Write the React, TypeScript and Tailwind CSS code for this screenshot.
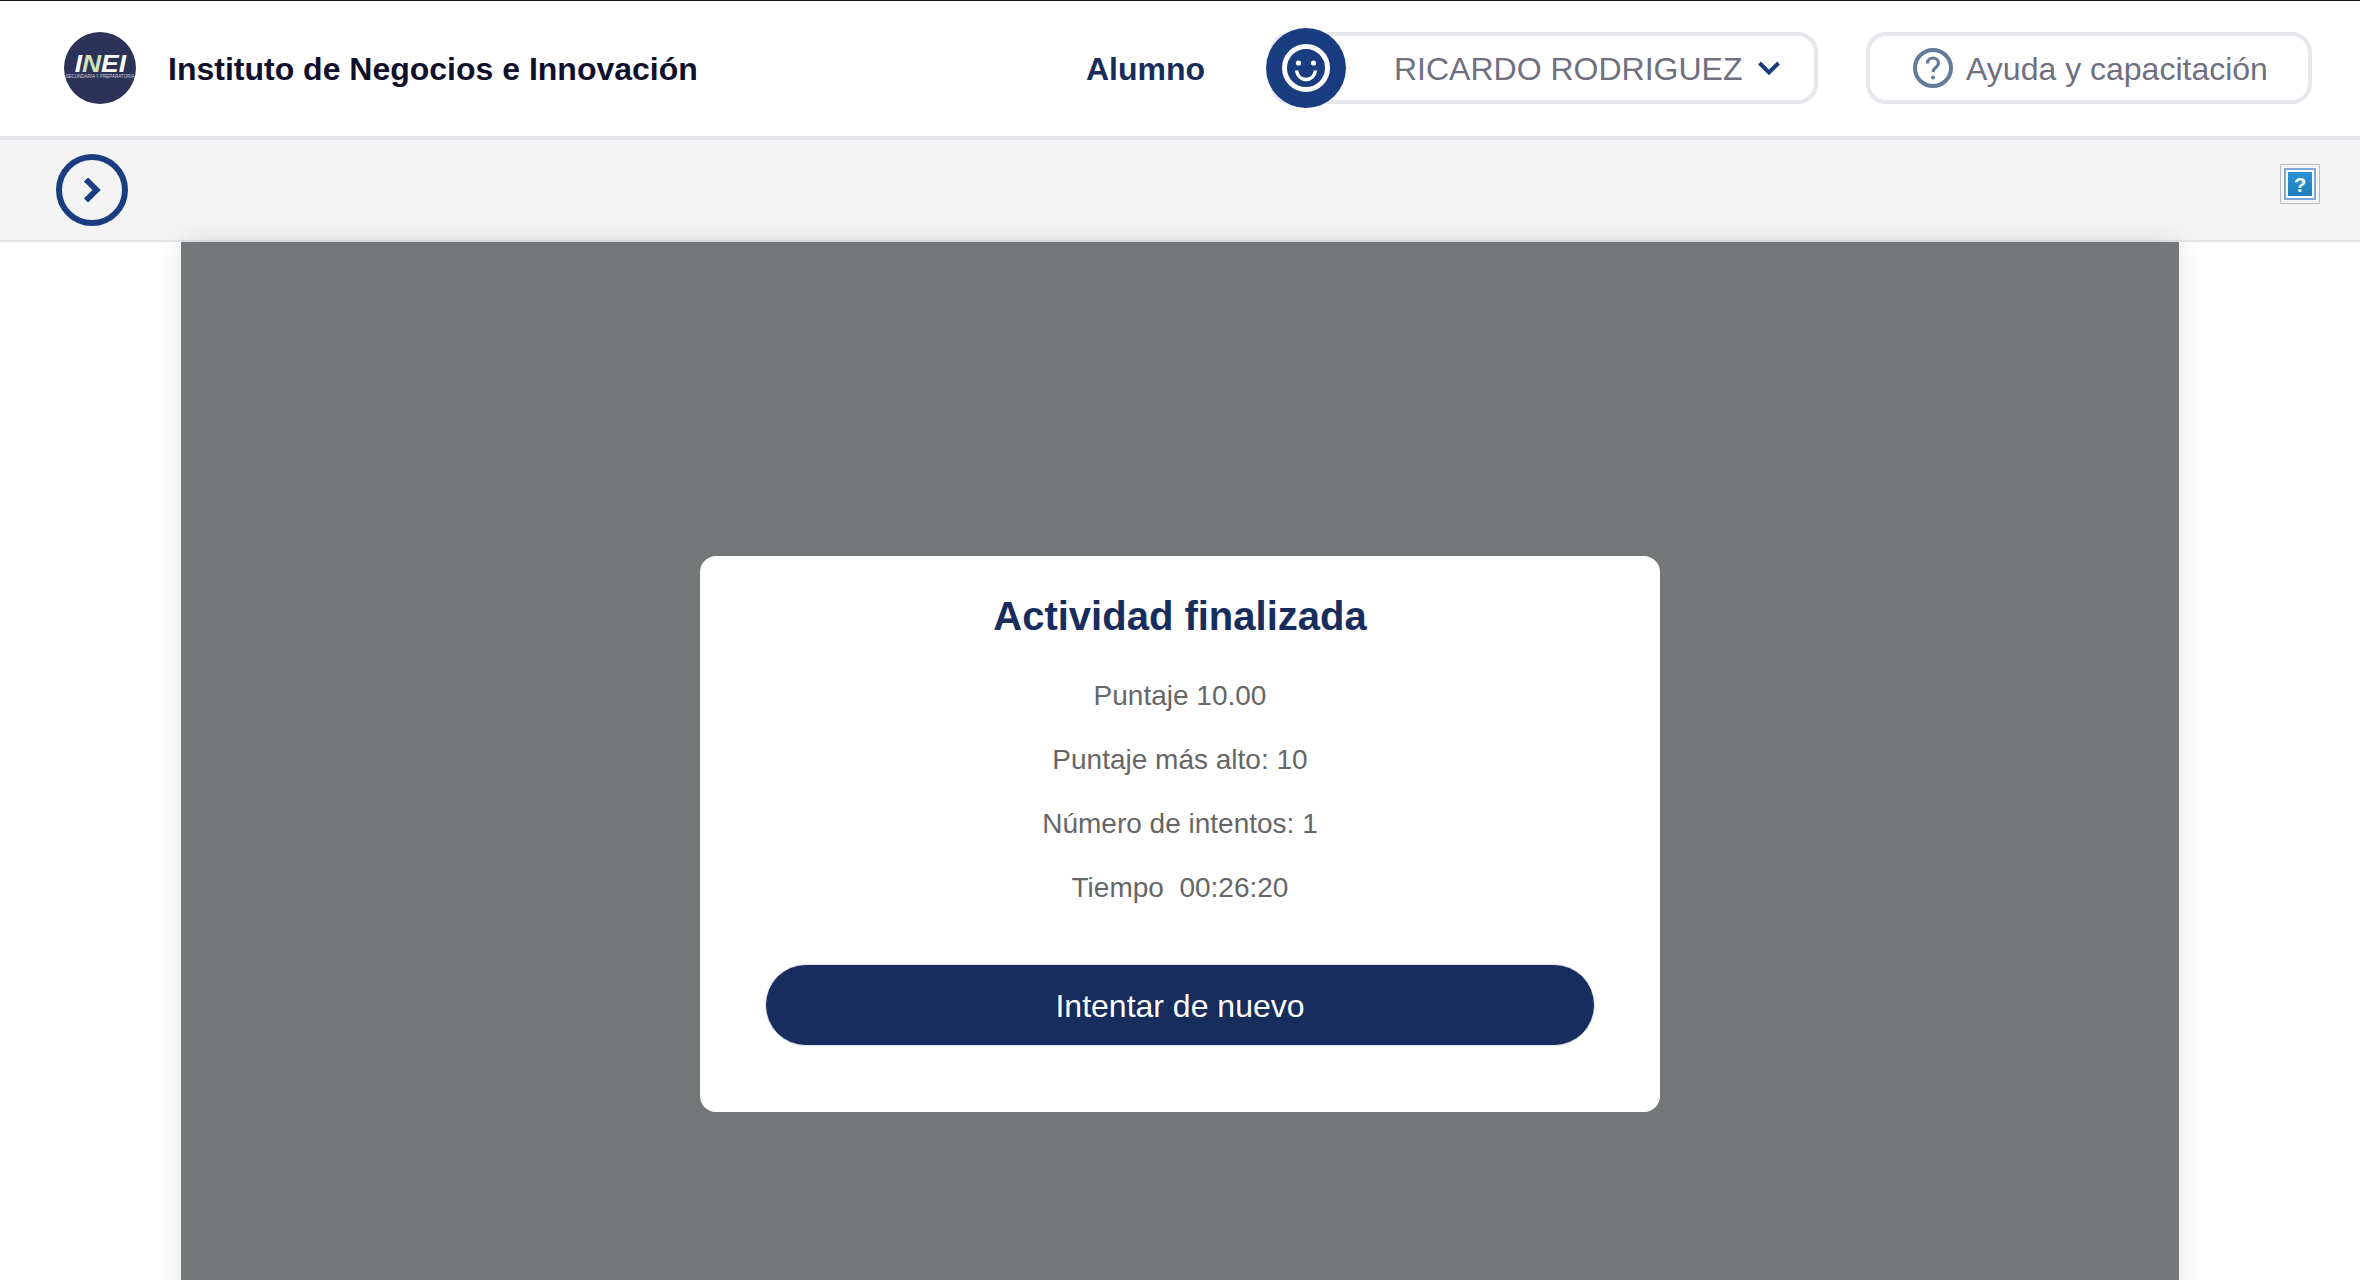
import React from 'react';

const stats = ['Puntaje 10.00', 'Puntaje más alto: 10', 'Número de intentos: 1', 'Tiempo \u00a000:26:20'];

const Logo: React.FC = () => (
  <div className="w-[72px] h-[72px] rounded-full bg-[#2b3458] flex flex-col items-center justify-center shrink-0">
    <div className="text-white italic font-bold text-[23px] leading-[19px] scale-x-[1.15]">
      I<span className="text-[#cfe6b8]">N</span>EI
    </div>
    <div className="text-[#c9cedb] text-[4.500px] leading-[6px] whitespace-nowrap">SECUNDARIA Y PREPARATORIA</div>
  </div>
);

const SmileIcon: React.FC = () => (
  <svg width="48" height="48" viewBox="0 0 48 48" fill="none">
    <circle cx="24" cy="24" r="21.5" stroke="white" strokeWidth="5" />
    <circle cx="16.5" cy="19" r="2.6" fill="white" />
    <circle cx="31.5" cy="19" r="2.6" fill="white" />
    <path d="M14.5 26.5c1 6 5 9 9.5 9s8.500-3 9.500-9" stroke="white" strokeWidth="3.500" />
  </svg>
);

export default function App() {
  return (
    <div className="w-[2360px] h-[1280px] overflow-hidden bg-white font-['Liberation_Sans',Arial,sans-serif]">
      <header className="h-[140px] bg-white border-t border-t-[#1a1a1a] border-b-4 border-b-[#e5e5ea] flex items-center pl-[64px] pr-[48px] pb-[2px]">
        <Logo />
        <h1 className="ml-[32px] pt-[2px] text-[32px] font-bold text-[#10102c] whitespace-nowrap">Instituto de Negocios e Innovación</h1>
        <span className="ml-auto pt-[2px] text-[32px] font-bold text-[#162d5d]">Alumno</span>
        <div className="ml-[61px] relative w-[552px] h-[72px] pl-[4px]">
          <div className="h-full border-4 border-[#e5e7eb] rounded-[20px] flex items-center pl-[120px]">
            <span className="pt-[2px] text-[32px] text-[#6f6f7f] whitespace-nowrap">RICARDO RODRIGUEZ</span>
            <svg className="ml-[15px]" width="24" height="16" viewBox="0 0 24 16" fill="none">
              <path d="M2.500 3 12 12.500 21.500 3" stroke="#1a3d82" strokeWidth="4" />
            </svg>
          </div>
          <div className="absolute left-0 top-[-4px] w-[80px] h-[80px] rounded-full bg-[#1a3d82] flex items-center justify-center">
            <SmileIcon />
          </div>
        </div>
        <button className="ml-[48px] w-[446px] h-[72px] border-4 border-[#e5e7eb] rounded-[20px] flex items-center justify-center gap-[13px] pl-[3px]">
          <svg width="40" height="40" viewBox="0 0 40 40" fill="none">
            <circle cx="20" cy="20" r="18" stroke="#647a9b" strokeWidth="4" />
            <path d="M14.500 15.500c0-3.500 2.500-5.500 5.500-5.500s5.500 2 5.500 5c0 4.500-5.500 4.500-5.500 9" stroke="#647a9b" strokeWidth="3.200" />
            <circle cx="20" cy="29.500" r="2" fill="#647a9b" />
          </svg>
          <span className="pt-[2px] text-[32px] text-[#6f6f7f] whitespace-nowrap">Ayuda y capacitación</span>
        </button>
      </header>

      <div className="h-[102px] bg-[#f4f4f4] border-b-2 border-b-[#e5e5ea] flex items-center justify-between pl-[56px] pr-[40px]">
        <button className="w-[72px] h-[72px] rounded-full border-[6px] border-[#1a3d82] flex items-center justify-center">
          <svg width="20" height="28" viewBox="0 0 20 28" fill="none">
            <path d="M4 3.500 14.500 14 4 24.500" stroke="#1a3d82" strokeWidth="6" />
          </svg>
        </button>
        <div className="w-[40px] h-[40px] border border-[#bbbbbb] p-[3px] mb-[12px]">
          <div className="w-full h-full border-[2px] border-[#7fa8d6] bg-white p-[2px]">
            <div className="w-full h-full bg-gradient-to-b from-[#2b93d3] to-[#1f7dba] text-white font-bold text-[20px] leading-[26px] text-center">?</div>
          </div>
        </div>
      </div>

      <main className="w-[1998px] h-[1184px] ml-[181px] bg-[#747778] shadow-[0_0_24px_rgba(0,0,0,0.12)] flex items-center justify-center">
        <div className="w-[960px] h-[556px] bg-white rounded-[16px] pt-[37px] px-[65px] flex flex-col items-center">
          <h2 className="text-[40px] leading-[46px] font-bold text-[#162d5d]">Actividad finalizada</h2>
          <div className="mt-[41px] flex flex-col items-center gap-[32px]">
            {stats.map(line => (
              <p key={line} className="text-[28px] leading-[32px] text-[#666666]">{line}</p>
            ))}
          </div>
          <button className="mt-[60px] w-full h-[82px] pt-[2px] rounded-full bg-[#162d5d] border border-[#dfe3ea] text-white text-[32px]">
            Intentar de nuevo
          </button>
        </div>
      </main>
    </div>
  );
}
